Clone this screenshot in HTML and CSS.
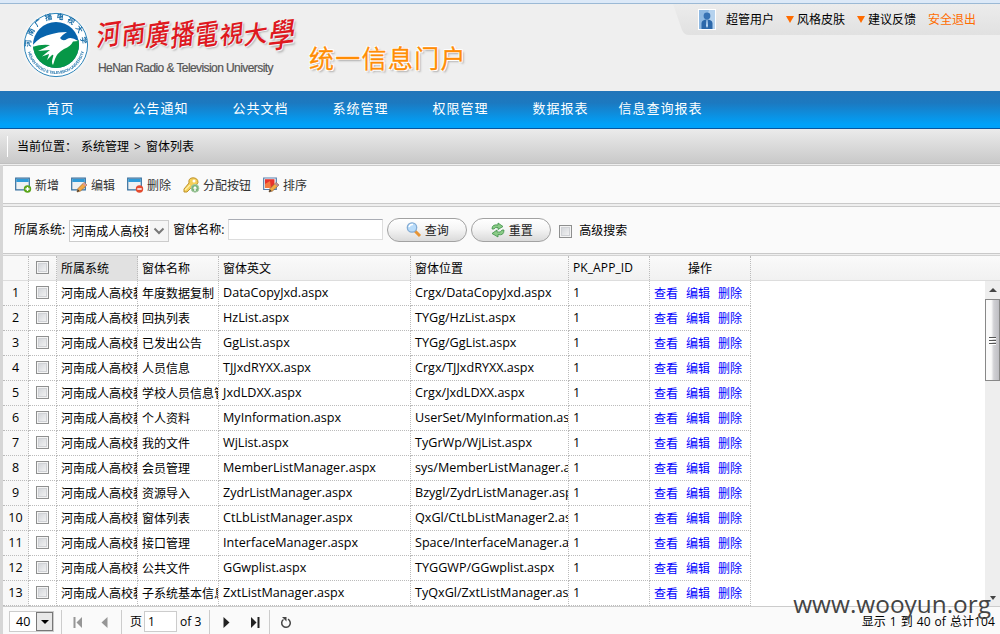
FILE: index.html
```html
<!DOCTYPE html>
<html lang="zh-CN">
<head>
<meta charset="utf-8">
<title>统一信息门户</title>
<link rel="stylesheet" href="styles.css">
</head>
<body>
<div class="frame-top"></div>
<header class="header">
  <svg class="emblem" viewBox="0 0 68 68" width="68" height="68">
    <defs>
      <path id="arcTop" d="M9.5 39A25.2 25.2 0 1 1 58.5 39"/>
      <path id="arcBottom" d="M5.7 40A28.9 28.9 0 0 0 62.3 40"/>
      <clipPath id="disc"><circle cx="34" cy="34" r="23"/></clipPath>
    </defs>
    <circle cx="34" cy="34" r="31.6" fill="#fff" stroke="#2b83b8" stroke-width="1"/>
    <g clip-path="url(#disc)">
      <rect width="68" height="68" fill="#0864ac"/>
      <path d="M8 36L18 33L35 32L43 34L54 29L60 29V60H8Z" fill="#079747"/>
      <path d="M10 35Q18 25 30 23Q36 21 45 21Q40 24 38 27Q41 31 45 28Q49 25 56 30L51 30.500Q49 35 42 38Q35 42 33 48L31 54Q29 52 31 46Q32 43 30 44L25 49Q27 44 27 43L20 45.500Q24 42 28 39L16 40Q23 37 28 34Q18 33 10 36Z" fill="#fff"/>
    </g>
    <text class="seal-cn"><textPath href="#arcTop" startOffset="3" textLength="82">河南广播电视大学</textPath></text>
    <text class="seal-en"><textPath href="#arcBottom" startOffset="1" textLength="77">HENAN RADIO &amp; TELEVISION UNIVERSITY</textPath></text>
  </svg>
  <div class="school">
    <div class="school-cn"><span>河</span><span class="sm">南</span><span>廣</span><span>播</span><span>電</span><span class="sm">視</span><span class="sm">大</span><span class="lg">學</span></div>
    <div class="school-en">HeNan Radio &amp; Television University</div>
  </div>
  <div class="portal">统一信息门户</div>
  <div class="userbar">
    <svg class="userbar-bg" width="327" height="31" viewBox="0 0 327 31">
      <defs><linearGradient id="ub" x2="0" y2="1"><stop stop-color="#ececec"/><stop offset="1" stop-color="#e1e1e1"/></linearGradient></defs>
      <path d="M0 0H327V31H16Q11 31 9 26Z" fill="url(#ub)"/>
    </svg>
    <svg class="avatar" width="18" height="21" viewBox="0 0 18 21">
      <rect width="18" height="21" fill="#fff"/><rect x="1" y="1" width="16" height="19" fill="#b5d2ee"/><path d="M1 1H11L5 20H1Z" fill="#8fb9e2"/>
      <circle cx="9" cy="7" r="3.400" fill="#3772b4"/><path d="M3.500 20V14Q4 10.500 9 10.500T14.500 14V20Z" fill="#2c68aa"/><path d="M8.500 11H9.500L10 17L9 19L8 17Z" fill="#bcd9f5"/>
    </svg>
    <span class="user">超管用户</span>
    <span class="drop drop-skin">风格皮肤</span>
    <span class="drop">建议反馈</span>
    <span class="logout">安全退出</span>
  </div>
</header>
<nav class="nav"><a>首页</a><a>公告通知</a><a>公共文档</a><a>系统管理</a><a>权限管理</a><a>数据报表</a><a class="wide">信息查询报表</a></nav>
<div class="crumb"><i></i><span>当前位置：</span><span class="crumb-path">系统管理</span><span class="crumb-sep">&gt;</span><span>窗体列表</span></div>
<main class="main">
  <div class="toolbar">
    <a><svg width="17" height="16"><path d="M.7 1.200H14.300V12.800H.7Z" fill="#eef1f3" stroke="#356f9d" stroke-width="1.200"/><path d="M1.300 2H13.700V5H1.300Z" fill="#2f9ad8"/><circle cx="12.500" cy="12" r="3.700" fill="#5ba51b"/><path d="M10.500 12H14.500M12.500 10V14" stroke="#fff" stroke-width="1.400"/></svg>新增</a>
    <a><svg width="17" height="16"><path d="M.7 1.200H14.300V12.800H.7Z" fill="#eef1f3" stroke="#356f9d" stroke-width="1.200"/><path d="M1.300 2H13.700V5H1.300Z" fill="#2f9ad8"/><path d="M6 15L7 11.500L13 5.500L16 8L9.500 14Z" fill="#f3a843" stroke="#9b6630" stroke-width=".7"/><path d="M13 5.500L16 8L14.500 9.500L11.700 7Z" fill="#d69ba0"/><path d="M6 15L7 12.500L8.500 14Z" fill="#333"/></svg>编辑</a>
    <a><svg width="17" height="16"><path d="M.7 1.200H14.300V12.800H.7Z" fill="#eef1f3" stroke="#356f9d" stroke-width="1.200"/><path d="M1.300 2H13.700V5H1.300Z" fill="#2f9ad8"/><circle cx="12.500" cy="12" r="3.700" fill="#e44b30"/><path d="M10.300 12H14.700" stroke="#fff" stroke-width="1.500"/></svg>删除</a>
    <a><svg width="17" height="16"><path d="M6 6Q5 1 10 .8Q15 1 15 5.500Q14 9 10 9L4 15H1V12Z" fill="#f4cf58" stroke="#be922d"/><circle cx="11" cy="4" r="1.500" fill="#fff"/><path d="M2 13L7 8" stroke="#fff0a5" stroke-width="1.200"/><circle cx="12" cy="11.300" r="3.900" fill="#7ab478" stroke="#a9c9a6"/><path d="M12 9L14.300 11.500H12.700V14H11.300V11.500H9.700Z" fill="#fff"/></svg>分配按钮</a>
    <a><svg width="17" height="16"><path d="M.7 1H13.300V12.500H.7Z" fill="#fff" stroke="#567dab" stroke-width="1.200"/><path d="M2 2.200H11.500V11H2Z" fill="#e8332c"/><path d="M2 7L7 4L8 11H2Z" fill="#f57c41"/><path d="M6 15L7 11.500L13 5.500L16 8L9.500 14Z" fill="#f3ab42" stroke="#866040" stroke-width=".7"/><path d="M13 5.500L16 8L14.500 9.500L11.700 7Z" fill="#b48998"/><path d="M6 15L7 12.500L8.500 14Z" fill="#333"/></svg>排序</a>
  </div>
  <div class="search">
    <span class="label">所属系统:</span>
    <div class="combo"><span>河南成人高校教</span><b><svg width="12" height="8"><path d="M1.500 1.500L6 6L10.500 1.500" fill="none" stroke="#777" stroke-width="2"/></svg></b></div>
    <span class="label">窗体名称:</span>
    <div class="field"></div>
    <button class="btn"><svg width="16" height="16"><path d="M9 9L14 14" stroke="#e79435" stroke-width="3"/><circle cx="6" cy="5.500" r="4.700" fill="#b9dcfa" stroke="#84acd4" stroke-width="1.300"/><path d="M3 5Q4 2 7 2.500" stroke="#fff" stroke-width="1.500" fill="none"/></svg>查询</button>
    <button class="btn"><svg width="16" height="16"><path d="M2 7Q2 2 8 3V1L13 4.500L8 7.500V5.500Q5 5 4 7Z" fill="#8acb86" stroke="#3e9148" stroke-width=".8"/><path d="M14 8Q14 14 8 12.500V15L2 11.500L7 8V10Q11 11 12 8Z" fill="#8acb86" stroke="#3e9148" stroke-width=".8"/></svg>重置</button>
    <i class="check"></i><span class="advanced">高级搜索</span>
  </div>
  <section class="grid">
    <div class="row head"><span></span><span><i class="check"></i></span><span class="sorted">所属系统</span><span>窗体名称</span><span>窗体英文</span><span>窗体位置</span><span class="latin">PK_APP_ID</span><span class="op">操作</span></div>
    <div class="body">
      <div class="rows">
        <div class="row"><span>1</span><span><i class="check"></i></span><span>河南成人高校教</span><span>年度数据复制</span><span>DataCopyJxd.aspx</span><span>Crgx/DataCopyJxd.aspx</span><span>1</span><span><a>查看</a><a>编辑</a><a>删除</a></span></div>
        <div class="row"><span>2</span><span><i class="check"></i></span><span>河南成人高校教</span><span>回执列表</span><span>HzList.aspx</span><span>TYGg/HzList.aspx</span><span>1</span><span><a>查看</a><a>编辑</a><a>删除</a></span></div>
        <div class="row"><span>3</span><span><i class="check"></i></span><span>河南成人高校教</span><span>已发出公告</span><span>GgList.aspx</span><span>TYGg/GgList.aspx</span><span>1</span><span><a>查看</a><a>编辑</a><a>删除</a></span></div>
        <div class="row"><span>4</span><span><i class="check"></i></span><span>河南成人高校教</span><span>人员信息</span><span>TJJxdRYXX.aspx</span><span>Crgx/TJJxdRYXX.aspx</span><span>1</span><span><a>查看</a><a>编辑</a><a>删除</a></span></div>
        <div class="row"><span>5</span><span><i class="check"></i></span><span>河南成人高校教</span><span>学校人员信息管理</span><span>JxdLDXX.aspx</span><span>Crgx/JxdLDXX.aspx</span><span>1</span><span><a>查看</a><a>编辑</a><a>删除</a></span></div>
        <div class="row"><span>6</span><span><i class="check"></i></span><span>河南成人高校教</span><span>个人资料</span><span>MyInformation.aspx</span><span>UserSet/MyInformation.aspx</span><span>1</span><span><a>查看</a><a>编辑</a><a>删除</a></span></div>
        <div class="row"><span>7</span><span><i class="check"></i></span><span>河南成人高校教</span><span>我的文件</span><span>WjList.aspx</span><span>TyGrWp/WjList.aspx</span><span>1</span><span><a>查看</a><a>编辑</a><a>删除</a></span></div>
        <div class="row"><span>8</span><span><i class="check"></i></span><span>河南成人高校教</span><span>会员管理</span><span>MemberListManager.aspx</span><span>sys/MemberListManager.aspx</span><span>1</span><span><a>查看</a><a>编辑</a><a>删除</a></span></div>
        <div class="row"><span>9</span><span><i class="check"></i></span><span>河南成人高校教</span><span>资源导入</span><span>ZydrListManager.aspx</span><span>Bzygl/ZydrListManager.aspx</span><span>1</span><span><a>查看</a><a>编辑</a><a>删除</a></span></div>
        <div class="row"><span>10</span><span><i class="check"></i></span><span>河南成人高校教</span><span>窗体列表</span><span>CtLbListManager.aspx</span><span>QxGl/CtLbListManager2.aspx</span><span>1</span><span><a>查看</a><a>编辑</a><a>删除</a></span></div>
        <div class="row"><span>11</span><span><i class="check"></i></span><span>河南成人高校教</span><span>接口管理</span><span>InterfaceManager.aspx</span><span>Space/InterfaceManager.aspx</span><span>1</span><span><a>查看</a><a>编辑</a><a>删除</a></span></div>
        <div class="row"><span>12</span><span><i class="check"></i></span><span>河南成人高校教</span><span>公共文件</span><span>GGwplist.aspx</span><span>TYGGWP/GGwplist.aspx</span><span>1</span><span><a>查看</a><a>编辑</a><a>删除</a></span></div>
        <div class="row"><span>13</span><span><i class="check"></i></span><span>河南成人高校教</span><span>子系统基本信息</span><span>ZxtListManager.aspx</span><span>TyQxGl/ZxtListManager.aspx</span><span>1</span><span><a>查看</a><a>编辑</a><a>删除</a></span></div>
      </div>
      <div class="scroll"><i class="up"></i><div class="thumb"><i></i><i></i><i></i></div><i class="down"></i></div>
    </div>
  </section>
  <footer class="pager">
    <div class="size"><span>40</span><b><i></i></b></div>
    <u></u>
    <svg class="p-first" width="10" height="11"><path d="M1.500 0V11" stroke="#969696" stroke-width="2"/><path d="M9 0V11L3.500 5.500Z" fill="#969696"/></svg>
    <svg class="p-prev" width="7" height="11"><path d="M6.500 0V11L.5 5.500Z" fill="#969696"/></svg>
    <u></u>
    <span class="page-label">页</span><div class="page">1</div><span class="of">of 3</span>
    <u></u>
    <svg class="p-next" width="7" height="11"><path d="M.5 0V11L6.500 5.500Z" fill="#222"/></svg>
    <svg class="p-last" width="10" height="11"><path d="M8.500 0V11" stroke="#222" stroke-width="2"/><path d="M1 0V11L6.500 5.500Z" fill="#222"/></svg>
    <u></u>
    <svg class="p-reload" width="12" height="13"><path d="M3.500 3.500A4.300 4.300 0 1 0 8 3.200" fill="none" stroke="#444" stroke-width="1.500"/><path d="M2 1H6.500V5.500Z" fill="#444"/></svg>
    <span class="total">显示 1 到 40 of 总计104</span>
  </footer>
</main>
<div class="watermark">www.wooyun.org</div>
</body>
</html>
```
FILE: styles.css
```css
* { box-sizing: border-box; }
body { margin: 0; width: 1000px; height: 634px; overflow: hidden; position: relative; background: #eee; color: #000; font: 12px/16px "Open Sans", "Noto Sans CJK SC", sans-serif; }
a, span, div { white-space: nowrap; }
svg { display: block; flex: none; }
.frame-top { height: 4px; background: #dce9f8; border-bottom: 1px solid #9bb9d5; }
.header { height: 87px; display: flex; position: relative; background: #efefef; padding-left: 22px; }
.emblem { margin-top: 7px; filter: drop-shadow(0 0 2px #fff); }
.seal-cn { font: bold 7.200px "Noto Sans CJK SC", sans-serif; fill: #176da8; }
.seal-en { font: bold 4.200px "Liberation Sans", sans-serif; fill: #2d7bb0; }
.school { width: 208px; padding: 11px 0 0 7px; }
.school-cn { display: flex; width: 194px; height: 40px; color: #df1820; font: 500 27px/40px "Noto Sans CJK TC", sans-serif; transform: skewX(-14deg); text-shadow: 1px 1px 1px #fff, 2px 2px 2px #aaa; }
.school-cn span { width: 24.500px; transform: rotate(-9deg) scale(.86, 1.080); transform-origin: left; }
.school-cn .sm { transform: rotate(-10deg) scale(.86, .92); }
.school-cn .lg { transform: rotate(-7deg) scale(.96, 1.250); }
.school-en { font: 12px/16px "Liberation Sans", sans-serif; color: #555; padding: 5px 0 0 1px; letter-spacing: -.58px; -webkit-text-stroke: .2px #555; }
.portal { padding: 35px 0 0 11px; font: 400 25px/36px "Noto Sans CJK SC", sans-serif; letter-spacing: 1.300px; color: #ff8d05; -webkit-text-stroke: .3px #ff8d05; text-shadow: -1px -1px #fff, 1px -1px #fff, -1px 1px #fff, 1px 1px #fff, 2px 2px 2px #aaa; }
.userbar { display: flex; position: relative; width: 327px; height: 31px; margin-left: auto; padding: 5px 0 0 25px; line-height: 21px; }
.userbar-bg { position: absolute; left: 0; top: 0; }
.userbar > * { flex: none; }
.avatar, .user, .drop, .logout { position: relative; }
.user { margin-left: 10px; }
.drop { display: flex; align-items: center; height: 21px; line-height: 21px; margin-left: 12px; }
.drop::before { content: ""; border: 4px solid transparent; border-top: 7px solid #ff6c00; border-bottom: 0; margin-right: 3px; }
.logout { margin-left: 12px; color: #ff6c00; }
.nav { display: flex; height: 38px; padding-left: 10px; background: linear-gradient(#2275b9, #1c79c0 32%, #00a1f9 90%); border-bottom: 1px solid #0655a1; color: #fff; font-size: 13px; line-height: 35px; letter-spacing: 1px; }
.nav a { width: 100px; text-align: center; padding-left: 1px; }
.crumb { display: flex; height: 35px; background: linear-gradient(#ebebeb, #c9c9c9); border-bottom: 1px solid #c0c0c0; padding-left: 7px; line-height: 35px; }
.crumb i { width: 1px; height: 21px; margin: 7px 9px 0 0; background: #fff; }
.crumb-path { margin-left: 4px; }
.crumb-sep { width: 7px; margin: 0 5px; }
.main { margin-top: 1px; border-left: 3px solid #d6d6d6; }
.toolbar { display: flex; height: 39px; padding: 11px 0 0 12px; border: 1px solid #c9c9c9; border-width: 1px 0; background: #fafafa; color: #333; gap: 12px; }
.toolbar a { display: flex; line-height: 18px; gap: 3px; }
.search { display: flex; align-items: center; height: 48px; margin-top: 2px; padding: 0 0 0 11px; border: 1px solid #c9c9c9; border-width: 1px 0; background: #fafafa; }
.label { line-height: 18px; }
.combo { display: flex; width: 100px; height: 22px; margin: 2px 4px 0; border: 1px solid #ccc; background: #fff; }
.combo span { width: 80px; padding-left: 2px; border-right: 2px solid #fff; overflow: hidden; line-height: 22px; }
.combo b { display: flex; align-items: center; justify-content: center; flex: 1; background: #f5f5f5; }
.field { width: 155px; height: 21px; margin: -1px 4px 0; border: 1px solid #ddd; border-top-color: #aaadb5; background: #fff; }
.btn { display: flex; align-items: center; justify-content: center; gap: 3px; width: 80px; height: 24px; padding: 0; margin-right: 4px; margin-top: -1px; border: 1px solid #a2a2a2; border-radius: 12px; background: linear-gradient(#fff, #f5f5f5 45%, #dadada); color: #222; font: 12px/20px "Noto Sans CJK SC", sans-serif; }
.check { display: block; flex: none; width: 13px; height: 13px; border: 1px solid #8e8f8f; box-shadow: inset 0 0 0 1px #f4f4f4, inset 0 0 0 2px #d0d2d6; background: linear-gradient(135deg, #cdd0d5, #f8f8f8); }
.search .check { margin: 2px 7px 0 4px; }
.advanced { margin-top: 2px; }
.grid { height: 352px; margin-top: 1px; border-top: 1px solid #d2d2d2; background: #fff; }
.row { display: grid; grid-template-columns: 26px 28px 81px 81px 192px 158px 81px 101px; width: 748px; height: 25px; }
.row > span { min-width: 0; overflow: hidden; padding-left: 4px; border-right: 1px dotted #bbb; border-bottom: 1px dotted #bbb; line-height: 25px; }
.row > span:first-child { padding: 0; text-align: center; background: #f8f8f8; font-size: 12.500px; line-height: 23px; }
.row > span:nth-child(2) { padding: 5px 0 0 7px; }
.row:not(.head) > span:nth-child(5), .row:not(.head) > span:nth-child(6), .row > span:nth-child(7) { font-size: 12.600px; line-height: 23px; }
.row a { color: #00f; margin-right: 8px; }
.head { width: auto; background: linear-gradient(#fafafa, #f1f1f1); border-bottom: 1px solid #ddd; }
.head > span { border-bottom: 0; }
.head > .sorted { background: #e1e1e1; }
.head > span:nth-child(7) { font-size: 12px; line-height: 24px; letter-spacing: .1px; }
.head > .op { padding: 0; text-align: center; }
.body { display: flex; justify-content: space-between; height: 325px; }
.scroll { display: flex; flex-direction: column; align-items: center; width: 15px; background: #eee; }
.up { border: 4px solid transparent; border-bottom: 4px solid #444; border-top: 0; margin: 7px 0; }
.down { border: 3px solid transparent; border-top: 4px solid #444; border-bottom: 0; margin: auto 0 6px; }
.thumb { display: flex; flex-direction: column; align-items: center; justify-content: center; gap: 2px; width: 15px; height: 82px; border: 1px solid #888; background: linear-gradient(90deg, #fafafa 40%, #d0d0d4 60%, #bebec3); }
.thumb i { width: 7px; height: 1px; background: #555; box-shadow: 0 1px #fff; }
.pager { display: flex; align-items: flex-start; height: 29px; margin-top: -1px; padding: 4px 5px 0 6px; border-top: 1px solid #ccc; background: #fafafa; line-height: 21px; position: relative; }
.pager u { width: 1px; height: 26px; background: #ccc; margin-top: -1px; }
.size { display: flex; width: 45px; height: 21px; margin-right: 7px; border: 1px solid #ccc; background: #fff; }
.size span { width: 26px; padding-left: 6px; font-size: 12.500px; line-height: 19px; }
.size b { display: flex; align-items: center; justify-content: center; width: 17px; height: 19px; border: 1px solid #777; background: #e8e8e8; }
.size i { border: 4px solid transparent; border-top-color: #000; border-bottom: 0; }
.p-first { margin: 6px 18px 0 11px; }
.p-prev { margin: 6px 13px 0 0; }
.page-label { margin-left: 8px; }
.page { width: 33px; height: 21px; margin: 0 3px 0 2px; padding-left: 3px; border: 1px solid #ccc; background: #fff; line-height: 19px; }
.of { width: 29px; }
.p-next { margin: 6px 20px 0 13px; }
.p-last { margin: 6px 9px 0 0; }
.p-reload { margin: 5px 0 0 10px; }
.total { margin-left: auto; letter-spacing: .1px; word-spacing: .7px; }
.watermark { position: absolute; right: 9px; top: 589px; color: #444; font: 24.400px/30px "Open Sans", sans-serif; }
```
